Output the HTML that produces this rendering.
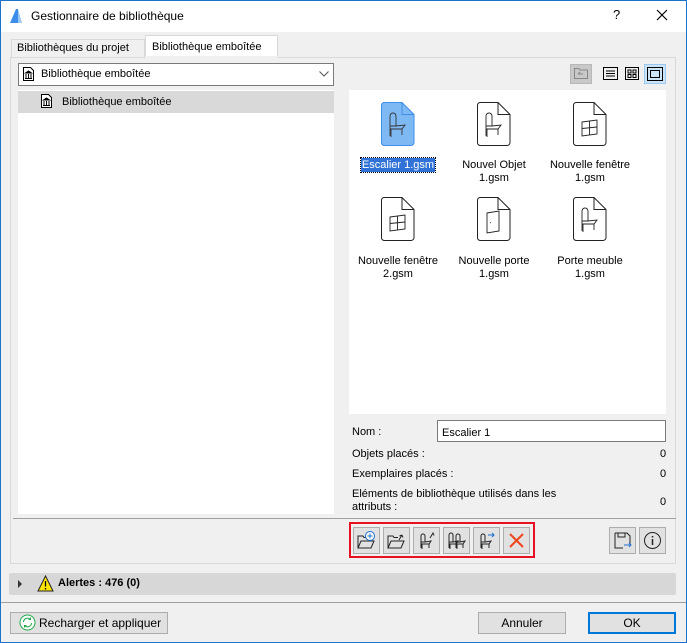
<!DOCTYPE html>
<html><head><meta charset="utf-8"><style>
*{box-sizing:border-box;margin:0;padding:0}
body{width:687px;height:643px;overflow:hidden;font-family:"Liberation Sans",sans-serif;font-size:11px;color:#000;background:#f0f0f0;position:relative}
.a{position:absolute}
.win{left:0;top:0;width:687px;height:643px;border:1px solid #1c73c9}
.btn{position:absolute;background:#e1e1e1;border:1px solid #adadad;text-align:center;line-height:20px;font-size:12px}
.tb{position:absolute;top:527px;width:27px;height:27px;background:#e1e1e1;border:1px solid #adadad}
.lbl{position:absolute;width:100px;text-align:center;font-size:11px;line-height:13px}
</style></head><body>
<div class="a win"></div>
<div class="a" style="left:1px;top:1px;width:685px;height:31px;background:#fff"></div>
<svg class="a" style="left:9px;top:8px" width="14" height="16"><path d="M1 15 L7 1 L9 1 L9 15Z" fill="#3d8ee8"/><path d="M9 1 L13 15 L9 15Z" fill="#9cc8f4"/></svg>
<div class="a" style="left:31px;top:9px;font-size:12px">Gestionnaire de bibliothèque</div>
<div class="a" style="left:613px;top:7px;font-size:13px">?</div>
<svg class="a" style="left:656px;top:9px" width="12" height="12"><path d="M1 1L11 11M11 1L1 11" stroke="#000" stroke-width="1.2"/></svg>

<div class="a" style="left:11px;top:39px;width:134px;height:18px;border:1px solid #d9d9d9;border-bottom:none;background:#f0f0f0"></div>
<div class="a" style="left:17px;top:42px;font-size:11px">Bibliothèques du projet</div>
<div class="a" style="left:145px;top:35px;width:133px;height:23px;border:1px solid #d9d9d9;border-bottom:none;background:#fff"></div>
<div class="a" style="left:152px;top:41px;font-size:11px">Bibliothèque emboîtée</div>
<div class="a" style="left:10px;top:57px;width:666px;height:507px;border:1px solid #d9d9d9;background:#f0f0f0"></div>
<div class="a" style="left:145px;top:56px;width:133px;height:3px;background:#f0f0f0"></div>

<div class="a" style="left:18px;top:63px;width:316px;height:23px;border:1px solid #7a7a7a;background:#fff"></div>
<svg class="a" style="left:23px;top:67px" width="11" height="14"><path d="M0.5 0.5H7.5L10.5 3.5V13.5H0.5Z" fill="#fff" stroke="#000"/><path d="M2.5 6L5.5 4L8.5 6ZM3 7V11M5.5 7V11M8 7V11M2 11.5H9" stroke="#000" fill="#000"/></svg>
<div class="a" style="left:41px;top:68px;font-size:11px">Bibliothèque emboîtée</div>
<svg class="a" style="left:319px;top:71px" width="10" height="6"><path d="M0.5 0.5L5 5L9.5 0.5" stroke="#555" fill="none"/></svg>

<div class="a" style="left:18px;top:90px;width:316px;height:424px;background:#fff"></div>
<div class="a" style="left:18px;top:91px;width:316px;height:22px;background:#d9d9d9"></div>
<svg class="a" style="left:41px;top:94px" width="11" height="14"><path d="M0.5 0.5H7.5L10.5 3.5V13.5H0.5Z" fill="#fff" stroke="#000"/><path d="M2.5 6L5.5 4L8.5 6ZM3 7V11M5.5 7V11M8 7V11M2 11.5H9" stroke="#000" fill="#000"/></svg>
<div class="a" style="left:62px;top:96px;font-size:11px">Bibliothèque emboîtée</div>

<div class="a" style="left:570px;top:64px;width:22px;height:20px;background:#c8c8c8;border:1px solid #b8b8b8"></div>
<svg class="a" style="left:574px;top:67px" width="14" height="12"><path d="M0.5 1.5H5L6 3H13.5V11.5H0.5Z" fill="none" stroke="#888"/><path d="M4 7H9M4 7L6 5" stroke="#888" fill="none"/></svg>
<svg class="a" style="left:603px;top:67px" width="15" height="13"><rect x="0.5" y="0.5" width="14" height="12" fill="none" stroke="#000"/><path d="M3 4H12M3 6.5H12M3 9H12" stroke="#000"/></svg>
<svg class="a" style="left:625px;top:67px" width="14" height="13"><rect x="0.5" y="0.5" width="13" height="12" fill="none" stroke="#000"/><rect x="3" y="3" width="3" height="3" fill="none" stroke="#000"/><rect x="8" y="3" width="3" height="3" fill="none" stroke="#000"/><rect x="3" y="7.5" width="3" height="3" fill="none" stroke="#000"/><rect x="8" y="7.5" width="3" height="3" fill="none" stroke="#000"/></svg>
<div class="a" style="left:644px;top:64px;width:22px;height:20px;background:#cce4f7;border:1px solid #99c9f0"></div>
<svg class="a" style="left:647px;top:67px" width="16" height="14"><rect x="0.5" y="0.5" width="15" height="13" fill="none" stroke="#000"/><rect x="3.5" y="3.5" width="9" height="7" fill="none" stroke="#000"/></svg>

<div class="a" style="left:349px;top:90px;width:317px;height:324px;background:#fff"></div>

<svg class="a" style="left:381px;top:102px" width="34" height="44"><path d="M3 0.5H21L33 12.5V40A3 3 0 0 1 30 43.5H3A3 3 0 0 1 0.5 40V3A3 3 0 0 1 3 0.5Z" fill="#7eb9f4" stroke="#3d8ee8"/><path d="M21 0.5V12.5H33" fill="none" stroke="#3d8ee8"/><path d="M9 34V14A3 3 0 0 1 15 14V24M9 24H15L24 23L21 27H9M10 27V35M21 27V33" fill="none" stroke="#333" stroke-width="0.9"/></svg>
<svg class="a" style="left:477px;top:102px" width="34" height="44"><path d="M3 0.5H21L33 12.5V40A3 3 0 0 1 30 43.5H3A3 3 0 0 1 0.5 40V3A3 3 0 0 1 3 0.5Z" fill="#fff" stroke="#222"/><path d="M21 0.5V12.5H33" fill="none" stroke="#222"/><path d="M9 34V14A3 3 0 0 1 15 14V24M9 24H15L24 23L21 27H9M10 27V35M21 27V33" fill="none" stroke="#222" stroke-width="0.9"/></svg>
<svg class="a" style="left:573px;top:102px" width="34" height="44"><path d="M3 0.5H21L33 12.5V40A3 3 0 0 1 30 43.5H3A3 3 0 0 1 0.5 40V3A3 3 0 0 1 3 0.5Z" fill="#fff" stroke="#222"/><path d="M21 0.5V12.5H33" fill="none" stroke="#222"/><path d="M9 20L24 18V32L9 34ZM16.5 19V33M9 26.5L24 25" fill="none" stroke="#222" stroke-width="0.9"/></svg>
<svg class="a" style="left:381px;top:197px" width="34" height="44"><path d="M3 0.5H21L33 12.5V40A3 3 0 0 1 30 43.5H3A3 3 0 0 1 0.5 40V3A3 3 0 0 1 3 0.5Z" fill="#fff" stroke="#222"/><path d="M21 0.5V12.5H33" fill="none" stroke="#222"/><path d="M9 20L24 18V32L9 34ZM16.5 19V33M9 26.5L24 25" fill="none" stroke="#222" stroke-width="0.9"/></svg>
<svg class="a" style="left:477px;top:197px" width="34" height="44"><path d="M3 0.5H21L33 12.5V40A3 3 0 0 1 30 43.5H3A3 3 0 0 1 0.5 40V3A3 3 0 0 1 3 0.5Z" fill="#fff" stroke="#222"/><path d="M21 0.5V12.5H33" fill="none" stroke="#222"/><path d="M10 16L22 14V34L10 36ZM13 26L14 25.5" fill="none" stroke="#222" stroke-width="0.9"/></svg>
<svg class="a" style="left:573px;top:197px" width="34" height="44"><path d="M3 0.5H21L33 12.5V40A3 3 0 0 1 30 43.5H3A3 3 0 0 1 0.5 40V3A3 3 0 0 1 3 0.5Z" fill="#fff" stroke="#222"/><path d="M21 0.5V12.5H33" fill="none" stroke="#222"/><path d="M9 34V14A3 3 0 0 1 15 14V24M9 24H15L24 23L21 27H9M10 27V35M21 27V33" fill="none" stroke="#222" stroke-width="0.9"/></svg>

<div class="a" style="left:361px;top:158px;width:74px;height:14px;background:#3072d6;outline:1px dotted #000;color:#fff;font-size:11px;line-height:14px;text-align:center">Escalier 1.gsm</div>
<div class="lbl" style="left:444px;top:159px">Nouvel Objet<br>1.gsm</div>
<div class="lbl" style="left:540px;top:159px">Nouvelle fenêtre<br>1.gsm</div>
<div class="lbl" style="left:348px;top:255px">Nouvelle fenêtre<br>2.gsm</div>
<div class="lbl" style="left:444px;top:255px">Nouvelle porte<br>1.gsm</div>
<div class="lbl" style="left:540px;top:255px">Porte meuble<br>1.gsm</div>

<div class="a" style="left:352px;top:426px">Nom :</div>
<div class="a" style="left:437px;top:420px;width:229px;height:22px;border:1px solid #7a7a7a;background:#fff;padding:6px 0 0 4px">Escalier 1</div>
<div class="a" style="left:352px;top:448px">Objets placés :</div>
<div class="a" style="left:660px;top:448px">0</div>
<div class="a" style="left:352px;top:468px">Exemplaires placés :</div>
<div class="a" style="left:660px;top:468px">0</div>
<div class="a" style="left:352px;top:488px;line-height:13px">Eléments de bibliothèque utilisés dans les<br>attributs :</div>
<div class="a" style="left:660px;top:496px">0</div>

<div class="a" style="left:13px;top:518px;width:663px;height:1px;background:#a0a0a0"></div>
<div class="a" style="left:349px;top:522px;width:186px;height:36px;border:2px solid #e81123"></div>
<div class="tb" style="left:353px"><svg width="25" height="25"><path d="M4 20V8H9L10 9.5H12M4 20L7 13H20L17 20Z" fill="none" stroke="#222"/><circle cx="16" cy="8" r="4.5" fill="#fff" stroke="#1e70d0"/><path d="M16 5.5V10.5M13.5 8H18.5" stroke="#1e70d0"/></svg></div>
<div class="tb" style="left:383px"><svg width="25" height="25"><path d="M4 20V8H9L10 9.5H14M4 20L7 13H20L17 20Z" fill="none" stroke="#222"/><path d="M15 12L18 7M18 7L19 9.5M18 7L15.5 8" fill="none" stroke="#222"/></svg></div>
<div class="tb" style="left:413px"><svg width="25" height="25"><path d="M7 20V8A2 2 0 0 1 11 8V14M7 14H11L17 13L15 16H7ZM8 16V21M15 16V20" fill="none" stroke="#222"/><path d="M16 10L19 5L20 7.5" fill="none" stroke="#222"/></svg></div>
<div class="tb" style="left:443px"><svg width="25" height="25"><path d="M5 20V7A2 2 0 0 1 9 7V14M5 14H9L14 13L12 16H5ZM6 16V21M12 16V20" fill="none" stroke="#222"/><path d="M12 20V8A2 2 0 0 1 16 8V14M12 14H16L21 13L19 16H12ZM13 16V21M19 16V20" fill="none" stroke="#222"/></svg></div>
<div class="tb" style="left:473px"><svg width="25" height="25"><path d="M7 20V8A2 2 0 0 1 11 8V14M7 14H11L17 13L15 16H7ZM8 16V21M15 16V20" fill="none" stroke="#222"/><path d="M14 7H20M18 5L20 7L18 9" fill="none" stroke="#1e70d0"/></svg></div>
<div class="tb" style="left:503px"><svg width="25" height="25"><path d="M6 6L19 19M19 6L6 19" stroke="#f0441c" stroke-width="2"/></svg></div>
<div class="tb" style="left:609px"><svg width="25" height="25"><path d="M5 5H17L20 8V17M5 5V20H13" fill="none" stroke="#222"/><rect x="8" y="5" width="7" height="4" fill="none" stroke="#222"/><path d="M14 17H21M19 15L21 17L19 19" fill="none" stroke="#1e70d0"/></svg></div>
<div class="tb" style="left:639px"><svg width="25" height="25"><circle cx="12.5" cy="12.5" r="8" fill="none" stroke="#222"/><path d="M12.5 11V17M12.5 8V9.5" stroke="#222" stroke-width="1.5"/></svg></div>

<div class="a" style="left:9px;top:573px;width:667px;height:22px;background:#d7d7d7;border-radius:2px"></div>
<svg class="a" style="left:18px;top:580px" width="5" height="8"><path d="M0 0L4 4L0 8Z" fill="#333"/></svg>
<svg class="a" style="left:37px;top:575px" width="17" height="17"><path d="M8.5 1L16 16H1Z" fill="#ffe600" stroke="#222"/><path d="M8.5 6V11.5M8.5 13V14.5" stroke="#000" stroke-width="1.3"/></svg>
<div class="a" style="left:58px;top:577px;font-weight:bold;font-size:11px">Alertes : 476 (0)</div>
<div class="a" style="left:1px;top:602px;width:685px;height:1px;background:#a0a0a0"></div>

<div class="btn" style="left:10px;top:612px;width:158px;height:22px;text-align:left;padding-left:28px">Recharger et appliquer</div>
<svg class="a" style="left:19px;top:614px" width="17" height="17"><circle cx="8.5" cy="8.5" r="7.5" fill="#fff" stroke="#1faa4a"/><path d="M4.5 8A4 4 0 0 1 11.5 5.5M12.5 9A4 4 0 0 1 5.5 11.5M11.5 3.5V5.5H9.5M5.5 13.5V11.5H7.5" fill="none" stroke="#1faa4a"/></svg>
<div class="btn" style="left:478px;top:612px;width:88px;height:22px">Annuler</div>
<div class="btn" style="left:588px;top:612px;width:88px;height:22px;border:2px solid #0078d7;line-height:18px">OK</div>
</body></html>
